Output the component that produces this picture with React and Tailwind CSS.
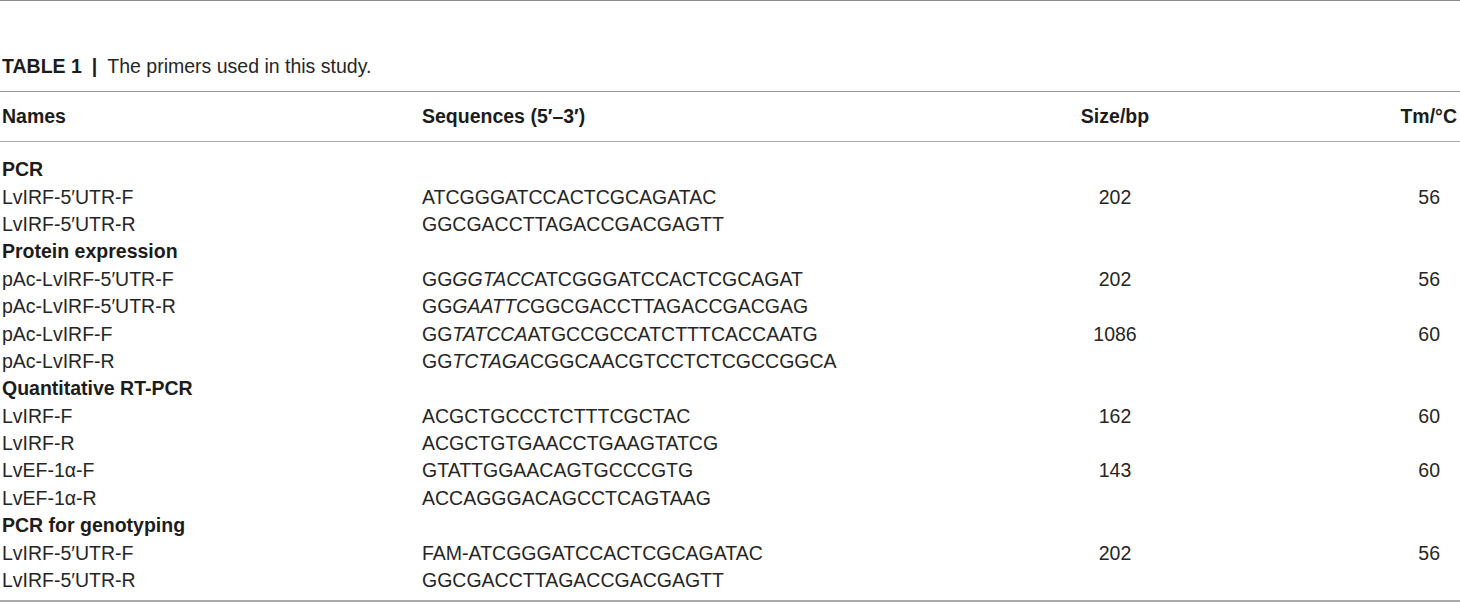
const rows = [
  { head: "PCR" },
  { name: "LvIRF-5′UTR-F", seq: ["ATCGGGATCCACTCGCAGATAC"], size: "202", tm: "56" },
  { name: "LvIRF-5′UTR-R", seq: ["GGCGACCTTAGACCGACGAGTT"] },
  { head: "Protein expression" },
  { name: "pAc-LvIRF-5′UTR-F", seq: ["GG", "GGTACC", "ATCGGGATCCACTCGCAGAT"], size: "202", tm: "56" },
  { name: "pAc-LvIRF-5′UTR-R", seq: ["GG", "GAATTC", "GGCGACCTTAGACCGACGAG"] },
  { name: "pAc-LvIRF-F", seq: ["GG", "TATCCA", "ATGCCGCCATCTTTCACCAATG"], size: "1086", tm: "60" },
  { name: "pAc-LvIRF-R", seq: ["GG", "TCTAGA", "CGGCAACGTCCTCTCGCCGGCA"] },
  { head: "Quantitative RT-PCR" },
  { name: "LvIRF-F", seq: ["ACGCTGCCCTCTTTCGCTAC"], size: "162", tm: "60" },
  { name: "LvIRF-R", seq: ["ACGCTGTGAACCTGAAGTATCG"] },
  { name: "LvEF-1α-F", seq: ["GTATTGGAACAGTGCCCGTG"], size: "143", tm: "60" },
  { name: "LvEF-1α-R", seq: ["ACCAGGGACAGCCTCAGTAAG"] },
  { head: "PCR for genotyping" },
  { name: "LvIRF-5′UTR-F", seq: ["FAM-ATCGGGATCCACTCGCAGATAC"], size: "202", tm: "56" },
  { name: "LvIRF-5′UTR-R", seq: ["GGCGACCTTAGACCGACGAGTT"] },
];

const cols = "grid grid-cols-[420px_620px_150px_1fr] items-center";

// the restriction site (middle part) is set in italics
const Sequence = ({ parts }) => (
  <>
    {parts.map((p, i) =>
      i === 1 ? (
        <i key={i}>{p}</i>
      ) : (
        <span key={i}>{p}</span>
      )
    )}
  </>
);

export default function App() {
  return (
    <div className="w-[1460px] h-[604px] bg-white text-[#262626] font-['Liberation_Sans',Arial,sans-serif] text-[19.5px] leading-[27px]">
      <div className="border-t border-[#8a8a8a] pt-[52px] pb-[11px] pl-[2px]">
        <span className="font-bold text-[#1c1c1c]">TABLE 1</span>
        <span className="font-bold mx-[10px] text-[#1c1c1c]">|</span>
        <span>The primers used in this study.</span>
      </div>

      <div className={`${cols} border-t border-[#999] py-[11px] font-bold text-[#1c1c1c]`}>
        <div className="pl-[2px]">Names</div>
        <div className="pl-[2px]">Sequences (5′–3′)</div>
        <div className="text-center">Size/bp</div>
        <div className="text-right pr-[3px]">Tm/°C</div>
      </div>

      <div className="border-t border-b-2 border-t-[#aaa] border-b-[#aaa] pt-[14px] pb-[6px]">
        {rows.map((r, i) =>
          r.head ? (
            <div key={i} className="h-[27.4px] flex items-center pl-[2px] font-bold text-[#1c1c1c]">
              {r.head}
            </div>
          ) : (
            <div key={i} className={`${cols} h-[27.4px]`}>
              <div className="pl-[2px]">{r.name}</div>
              <div className="pl-[2px]">
                <Sequence parts={r.seq} />
              </div>
              <div className="text-center">{r.size}</div>
              <div className="text-right pr-[20px]">{r.tm}</div>
            </div>
          )
        )}
      </div>
    </div>
  );
}
